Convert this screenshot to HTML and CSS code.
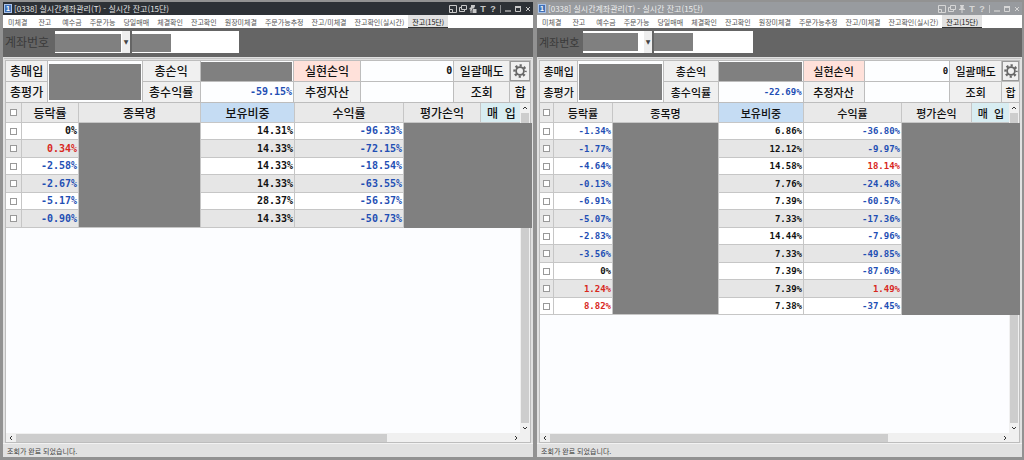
FILE: index.html
```html
<!DOCTYPE html>
<html lang="ko">
<head>
<meta charset="utf-8">
<title>실시간계좌관리</title>
<link rel="stylesheet" href="styles.css">
</head>
<body>
<svg class="defs" aria-hidden="true">
  <symbol id="i-dock" viewBox="0 0 8 8"><path d="M.5 7.500v-7h7v7zM.5 4.500h3v3" fill="none" stroke="currentColor"/></symbol>
  <symbol id="i-copy" viewBox="0 0 8 8"><path d="M2.500 .5h5v4h-5zM2 2.500H.5v4h5V5" fill="none" stroke="currentColor"/></symbol>
  <symbol id="i-pin" viewBox="0 0 8 8"><path d="M2 0h4v1H5.500v2.500L7 4v1H4.500v3h-1V5H1V4l1.500-.5V1H2z" fill="currentColor"/></symbol>
  <symbol id="i-pinlock" viewBox="0 0 8 8"><path d="M2 0h4v1L5 3.500H3.500L2.500 6H1l.5-1.500L0 4l2-2zM4 4h3.500v4H3.500V5z" fill="currentColor"/><path d="M1 7h2" stroke="currentColor"/></symbol>
  <symbol id="i-min" viewBox="0 0 8 8"><path d="M1 6h6" stroke="currentColor" stroke-width="1.200"/></symbol>
  <symbol id="i-max" viewBox="0 0 8 8"><path d="M1 2h6" stroke="currentColor" stroke-width="2"/><path d="M1.500 2v4.500h5V2" fill="none" stroke="currentColor"/></symbol>
  <symbol id="i-close" viewBox="0 0 8 8"><path d="M2 2l4 4M6 2L2 6" stroke="currentColor"/></symbol>
  <symbol id="i-gear" viewBox="0 0 14 14"><g fill="none" stroke="currentColor"><circle cx="7" cy="7" r="3.900" stroke-width="1.800"/><circle cx="7" cy="7" r="5.600" stroke-width="2.200" stroke-dasharray="2.200 2.198" stroke-dashoffset="1.100"/></g></symbol>
  <symbol id="i-up" viewBox="0 0 6 6"><path d="M1 4l2-2 2 2" fill="none" stroke="currentColor"/></symbol>
  <symbol id="i-down" viewBox="0 0 6 6"><path d="M1 2l2 2 2-2" fill="none" stroke="currentColor"/></symbol>
  <symbol id="i-left" viewBox="0 0 6 6"><path d="M4 1L2 3l2 2" fill="none" stroke="currentColor"/></symbol>
  <symbol id="i-right" viewBox="0 0 6 6"><path d="M2 1l2 2-2 2" fill="none" stroke="currentColor"/></symbol>
</svg>
<main class="desk">
  <section class="win win-active">
    <header class="title">
      <span class="num">1</span><h1>[0338] 실시간계좌관리(T) - 실시간 잔고(15단)</h1>
      <button aria-label="도킹"><svg><use href="#i-dock"/></svg></button>
      <button aria-label="복사"><svg><use href="#i-copy"/></svg></button>
      <button aria-label="고정"><svg><use href="#i-pinlock"/></svg></button>
      <button class="t">T</button><button class="t">?</button><i class="sep"></i>
      <button aria-label="최소화"><svg><use href="#i-min"/></svg></button>
      <button aria-label="최대화"><svg><use href="#i-max"/></svg></button>
      <button aria-label="닫기"><svg><use href="#i-close"/></svg></button>
    </header>
    <nav class="tabs">
      <a href="#">미체결</a><a href="#">잔고</a><a href="#">예수금</a><a href="#">주문가능</a><a href="#">당일매매</a><a href="#">체결확인</a><a href="#">잔고확인</a><a href="#">원장미체결</a><a href="#">주문가능추정</a><a href="#">잔고/미체결</a><a href="#">잔고확인(실시간)</a><a href="#" class="on">잔고(15단)</a>
    </nav>
    <div class="account">
      <label for="acc1">계좌번호</label>
      <div class="combo"><select id="acc1"><option></option></select><span class="mask"></span><span class="arrow">▼</span></div>
      <div class="entry"><input type="text" aria-label="계좌명"><span class="mask"></span></div>
    </div>
    <div class="frame">
      <div class="summary">
        <div class="k">총매입</div><div class="v tall"><span class="mask"></span></div><div class="k">총손익</div><div class="v"><span class="mask"></span></div><div class="k pink">실현손익</div><div class="v">0</div><button>일괄매도</button><button class="gear" aria-label="설정"><svg><use href="#i-gear"/></svg></button>
        <div class="k">총평가</div><div class="k">총수익률</div><div class="v down">-59.15%</div><div class="k">추정자산</div><div class="v"></div><button>조회</button><button>합</button>
      </div>
      <div class="view">
        <div class="sheet">
          <table>
            <colgroup><col class="c1"><col class="c2"><col class="c3"><col class="c4"><col class="c5"><col class="c6"><col class="c7"></colgroup>
            <thead><tr><th><input type="checkbox" aria-label="전체 선택"></th><th>등락률</th><th>종목명</th><th class="blue">보유비중</th><th>수익률</th><th>평가손익</th><th class="cyan">매&nbsp; 입</th></tr></thead>
            <tbody>
              <tr><td><input type="checkbox" aria-label="선택"></td><td>0%</td><td rowspan="6" class="hid"></td><td>14.31%</td><td class="down">-96.33%</td><td rowspan="6" colspan="2" class="hid wide"></td></tr>
              <tr><td><input type="checkbox" aria-label="선택"></td><td class="up">0.34%</td><td>14.33%</td><td class="down">-72.15%</td></tr>
              <tr><td><input type="checkbox" aria-label="선택"></td><td class="down">-2.58%</td><td>14.33%</td><td class="down">-18.54%</td></tr>
              <tr><td><input type="checkbox" aria-label="선택"></td><td class="down">-2.67%</td><td>14.33%</td><td class="down">-63.55%</td></tr>
              <tr><td><input type="checkbox" aria-label="선택"></td><td class="down">-5.17%</td><td>28.37%</td><td class="down">-56.37%</td></tr>
              <tr><td><input type="checkbox" aria-label="선택"></td><td class="down">-0.90%</td><td>14.33%</td><td class="down">-50.73%</td></tr>
            </tbody>
          </table>
        </div>
        <div class="vbar"><svg><use href="#i-up"/></svg><i></i><svg><use href="#i-down"/></svg></div>
      </div>
      <div class="hbar"><svg><use href="#i-left"/></svg><div class="track"><i></i></div><svg><use href="#i-right"/></svg></div>
    </div>
    <footer class="status">조회가 완료 되었습니다.</footer>
  </section>

  <section class="win win-back">
    <header class="title">
      <span class="num">1</span><h1>[0338] 실시간계좌관리(T) - 실시간 잔고(15단)</h1>
      <button aria-label="도킹"><svg><use href="#i-dock"/></svg></button>
      <button aria-label="복사"><svg><use href="#i-copy"/></svg></button>
      <button aria-label="고정"><svg><use href="#i-pin"/></svg></button>
      <button class="t">T</button><button class="t">?</button><i class="sep"></i>
      <button aria-label="최소화"><svg><use href="#i-min"/></svg></button>
      <button aria-label="최대화"><svg><use href="#i-max"/></svg></button>
      <button aria-label="닫기"><svg><use href="#i-close"/></svg></button>
    </header>
    <nav class="tabs">
      <a href="#">미체결</a><a href="#">잔고</a><a href="#">예수금</a><a href="#">주문가능</a><a href="#">당일매매</a><a href="#">체결확인</a><a href="#">잔고확인</a><a href="#">원장미체결</a><a href="#">주문가능추정</a><a href="#">잔고/미체결</a><a href="#">잔고확인(실시간)</a><a href="#" class="on">잔고(15단)</a>
    </nav>
    <div class="account">
      <label for="acc2">계좌번호</label>
      <div class="combo"><select id="acc2"><option></option></select><span class="mask"></span><span class="arrow">▼</span></div>
      <div class="entry"><input type="text" aria-label="계좌명"><span class="mask"></span></div>
    </div>
    <div class="frame">
      <div class="summary">
        <div class="k">총매입</div><div class="v tall"><span class="mask"></span></div><div class="k">총손익</div><div class="v"><span class="mask"></span></div><div class="k pink">실현손익</div><div class="v">0</div><button>일괄매도</button><button class="gear" aria-label="설정"><svg><use href="#i-gear"/></svg></button>
        <div class="k">총평가</div><div class="k">총수익률</div><div class="v down">-22.69%</div><div class="k">추정자산</div><div class="v"></div><button>조회</button><button>합</button>
      </div>
      <div class="view">
        <div class="sheet">
          <table>
            <colgroup><col class="c1"><col class="c2"><col class="c3"><col class="c4"><col class="c5"><col class="c6"><col class="c7"></colgroup>
            <thead><tr><th><input type="checkbox" aria-label="전체 선택"></th><th>등락률</th><th>종목명</th><th class="blue">보유비중</th><th>수익률</th><th>평가손익</th><th class="cyan">매&nbsp; 입</th></tr></thead>
            <tbody>
              <tr><td><input type="checkbox" aria-label="선택"></td><td class="down">-1.34%</td><td rowspan="11" class="hid"></td><td>6.86%</td><td class="down">-36.80%</td><td rowspan="11" colspan="2" class="hid wide"></td></tr>
              <tr><td><input type="checkbox" aria-label="선택"></td><td class="down">-1.77%</td><td>12.12%</td><td class="down">-9.97%</td></tr>
              <tr><td><input type="checkbox" aria-label="선택"></td><td class="down">-4.64%</td><td>14.58%</td><td class="up">18.14%</td></tr>
              <tr><td><input type="checkbox" aria-label="선택"></td><td class="down">-0.13%</td><td>7.76%</td><td class="down">-24.48%</td></tr>
              <tr><td><input type="checkbox" aria-label="선택"></td><td class="down">-6.91%</td><td>7.39%</td><td class="down">-60.57%</td></tr>
              <tr><td><input type="checkbox" aria-label="선택"></td><td class="down">-5.07%</td><td>7.33%</td><td class="down">-17.36%</td></tr>
              <tr><td><input type="checkbox" aria-label="선택"></td><td class="down">-2.83%</td><td>14.44%</td><td class="down">-7.96%</td></tr>
              <tr><td><input type="checkbox" aria-label="선택"></td><td class="down">-3.56%</td><td>7.33%</td><td class="down">-49.85%</td></tr>
              <tr><td><input type="checkbox" aria-label="선택"></td><td>0%</td><td>7.39%</td><td class="down">-87.69%</td></tr>
              <tr><td><input type="checkbox" aria-label="선택"></td><td class="up">1.24%</td><td>7.39%</td><td class="up">1.49%</td></tr>
              <tr><td><input type="checkbox" aria-label="선택"></td><td class="up">8.82%</td><td>7.38%</td><td class="down">-37.45%</td></tr>
            </tbody>
          </table>
        </div>
        <div class="vbar"><svg><use href="#i-up"/></svg><i></i><svg><use href="#i-down"/></svg></div>
      </div>
      <div class="hbar"><svg><use href="#i-left"/></svg><div class="track"><i></i></div><svg><use href="#i-right"/></svg></div>
    </div>
    <footer class="status">조회가 완료 되었습니다.</footer>
  </section>
</main>
</body>
</html>
```

FILE: styles.css
```css
* { box-sizing: border-box; }
body {
  margin: 0;
  background: #929292;
  color: #111;
  font-family: "Noto Sans CJK KR", sans-serif;
}
button, input, select { font: inherit; color: inherit; margin: 0; padding: 0; border: 0; border-radius: 0; }
.defs { display: none; }
.desk {
  display: grid;
  grid-template-columns: 530fr 485fr;
  gap: 4px;
  min-height: 100vh;
  padding: 2px 2px 3px 3px;
}
.win { display: flex; flex-direction: column; min-width: 0; background: #e1e1e1; }

/* title bar */
.title { display: flex; align-items: center; height: 13px; padding: 0 0 0 1px; color: #e4e4e4; background: #2d3136; }
.win-back .title { background: #989b9f; color: #eee; }
.num { width: 8px; height: 9px; border: 1px solid #a9c4ec; background: #416fb5; color: #fff; font: bold 7px/7px "Liberation Sans", sans-serif; text-align: center; }
h1 { flex: 1; margin: 0; padding-left: 2px; font-size: 8px; line-height: 12px; font-weight: 400; white-space: nowrap; }
.title button { display: flex; align-items: center; justify-content: center; width: 10px; height: 12px; background: none; color: #c8c8c8; }
.win-back .title button { color: #d6d6d6; }
.title svg { width: 8px; height: 8px; }
.title .t { font: bold 9px/12px "Liberation Sans", sans-serif; }
.sep { width: 1px; height: 8px; margin: 0 2px; background: #8a8c8f; }
.win-back .sep { background: #c4c6c8; }

/* menu tabs */
.tabs { display: flex; height: 13px; padding-left: 1px; background: #fff; overflow: hidden; }
.tabs a { min-width: 27px; padding: 0 4px; color: #555; font-size: 7px; line-height: 15px; text-align: center; text-decoration: none; white-space: nowrap; }
.tabs .on { background: #e2e2e2; color: #111; border-bottom: 1px solid #333; }

/* account bar */
.account { display: flex; align-items: flex-start; height: 29px; padding: 3px 2px; background: #656565; }
.account label { width: 50px; font-size: 12px; line-height: 22px; color: #3a3a3a; white-space: nowrap; }
.win-back .account label { width: 44px; font-size: 11px; }
.mask { background: #808080; }
.combo, .entry { position: relative; height: 22px; background: #fff; }
.combo { width: 75px; margin-right: 2px; }
.entry { width: 107px; }
.combo select, .entry input { display: block; width: 100%; height: 22px; appearance: none; background: #fff; }
.combo .mask { position: absolute; left: 0; top: 3px; width: 66px; height: 18px; }
.entry .mask { position: absolute; left: 0; top: 3px; width: 39px; height: 18px; }
.arrow { position: absolute; right: 0; top: 0; width: 8px; height: 22px; background: #eee; color: #444; font: 6px/21px "DejaVu Sans", sans-serif; text-align: center; pointer-events: none; }
.win-back .combo { width: 69px; }
.win-back .combo .mask { width: 55px; }
.win-back .entry { width: 99px; }
.win-back .account .mask { top: 2px; }

/* content frame */
.frame { display: flex; flex-direction: column; flex: 1; margin: 1px 1px 0 1px; padding: 1px 1px 0; border-top: 1px solid #c4c4c4; }
.summary {
  display: grid;
  grid-template-columns: 42fr 95fr 58fr 94fr 67fr 94fr 56fr 20fr;
  grid-template-rows: 20px 20px;
  gap: 1px;
  padding: 1px;
  background: #bdbdbd;
  font-size: 12px;
  font-weight: 500;
}
.win-back .summary { grid-template-columns: 38fr 86fr 55fr 85fr 61fr 86fr 52fr 17fr; font-size: 11px; }
.summary > * { display: flex; align-items: center; justify-content: center; min-width: 0; line-height: 20px; white-space: nowrap; background: #f0f0f0; }
.summary .v { justify-content: flex-end; padding-right: 1px; background: #fdfeff; font: bold 10px/20px "DejaVu Sans Mono", monospace; }
.win-back .summary .v, .win-back td { font-size: 9px; }
.summary .tall { grid-row: span 2; padding: 2px 1px; }
.v .mask { width: 100%; height: 19px; }
.tall .mask { height: 36px; }
.summary .pink { background: #ffe1da; }
.gear { color: #666; }
.summary .gear { border: 1px solid #999; }
.gear svg { width: 14px; height: 14px; flex: none; }

/* holdings */
.view { display: flex; flex: 1; background: #fcfdff; border: solid #bdbdbd; border-width: 0 1px; }
.sheet { flex: 1; min-width: 0; }
table { width: 100%; table-layout: fixed; border-collapse: separate; border-spacing: 0; }
.c1 { width: 16px; } .c2 { width: 57px; } .c3 { width: 122px; } .c4 { width: 94px; } .c5 { width: 109px; } .c6 { width: 77px; } .c7 { width: 41px; }
.win-back .c1 { width: 14px; } .win-back .c2 { width: 59px; } .win-back .c3 { width: 106px; } .win-back .c4 { width: 85px; } .win-back .c5 { width: 98px; } .win-back .c6 { width: 70px; } .win-back .c7 { width: 38px; }
th, td { padding: 0; border: solid #c6c6c6; border-width: 0 1px 1px 0; white-space: nowrap; }
th { height: 20px; background: #e9e9e9; font-size: 12px; line-height: 18px; font-weight: 500; }
.win-back th { font-size: 11px; }
th.blue { background: #c5dcf3; }
th.cyan { background: #d8edf2; border-right: 0; }
td { height: 17px; padding-right: 1px; font: bold 10px/16px "DejaVu Sans Mono", monospace; text-align: right; background: #fff; }
tr:nth-child(even) td { height: 18px; background: #e6e6e6; }
td:first-child, th:first-child { padding: 0 1px 0 0; text-align: center; }
.up { color: #d8281e; }
.down { color: #1f4fb4; }
tr td.hid { background: #808080; }
td.wide { position: relative; border: 0; }
td.wide::after { content: ""; position: absolute; top: 0; bottom: 0; left: 100%; width: 10px; background: #808080; }
input[type="checkbox"] { display: block; width: 7px; height: 7px; margin: 0 auto; appearance: none; border: 1px solid #999; background: #fff; }

/* scroll bars */
.vbar { display: flex; flex-direction: column; align-items: center; width: 10px; background: #f0f0f0; color: #333; }
.vbar svg, .hbar svg { width: 6px; height: 6px; margin: 2px; flex: none; }
.vbar i { flex: 1; width: 8px; background: #cdcdcd; }
.hbar { display: flex; align-items: center; height: 10px; padding-right: 9px; background: #f0f0f0; border: solid #bdbdbd; border-width: 0 1px 1px; color: #333; }
.track { flex: 1; height: 8px; }
.track i { display: block; width: 75%; height: 8px; background: #cdcdcd; }
.status { height: 14px; padding-left: 4px; font-size: 7px; line-height: 14px; color: #444; border-top: 1px solid #f2f2f2; }
```
